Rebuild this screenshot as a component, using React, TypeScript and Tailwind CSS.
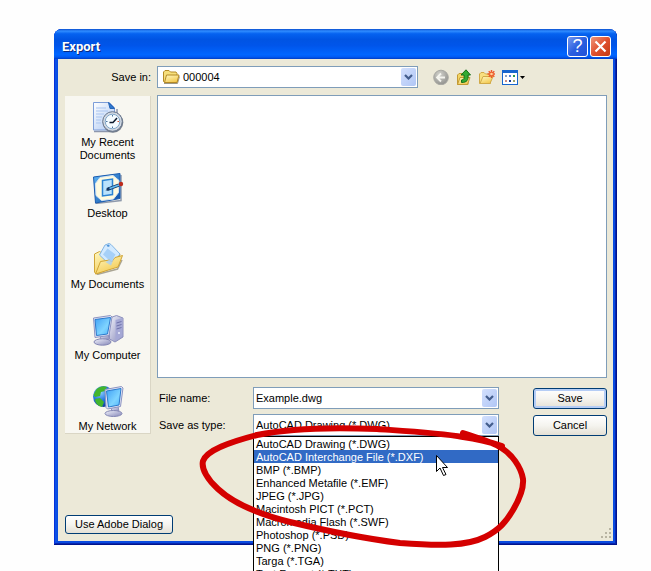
import { useState, type ReactNode } from 'react'

const FILE_TYPES = [
  'AutoCAD Drawing (*.DWG)',
  'AutoCAD Interchange File (*.DXF)',
  'BMP (*.BMP)',
  'Enhanced Metafile (*.EMF)',
  'JPEG (*.JPG)',
  'Macintosh PICT (*.PCT)',
  'Macromedia Flash (*.SWF)',
  'Photoshop (*.PSD)',
  'PNG (*.PNG)',
  'Targa (*.TGA)',
  'Text Format (*.TXT)',
]

const PLACES = [
  { label: 'My Recent Documents', icon: <RecentIcon /> },
  { label: 'Desktop', icon: <DesktopIcon /> },
  { label: 'My Documents', icon: <DocumentsIcon /> },
  { label: 'My Computer', icon: <ComputerIcon /> },
  { label: 'My Network', icon: <NetworkIcon /> },
]

function Gradients() {
  return (
    <svg className="absolute size-0" aria-hidden="true">
      <defs>
        <linearGradient id="paper" x1="0" y1="0" x2="1" y2="1">
          <stop offset="0" stopColor="#ffffff" />
          <stop offset="1" stopColor="#a9c6f3" />
        </linearGradient>
        <linearGradient id="folder" x1="0" y1="0" x2="0.6" y2="1">
          <stop offset="0" stopColor="#fff9c4" />
          <stop offset="1" stopColor="#f3c94f" />
        </linearGradient>
        <linearGradient id="screen" x1="0" y1="0" x2="1" y2="1">
          <stop offset="0" stopColor="#3fa0f5" />
          <stop offset="0.6" stopColor="#7fd4ff" />
          <stop offset="1" stopColor="#4db4fa" />
        </linearGradient>
        <linearGradient id="metal" x1="0" y1="0" x2="1" y2="1">
          <stop offset="0" stopColor="#f1f2fb" />
          <stop offset="1" stopColor="#8587b8" />
        </linearGradient>
        <linearGradient id="desk" x1="0" y1="0" x2="1" y2="1">
          <stop offset="0" stopColor="#5fb4f3" />
          <stop offset="1" stopColor="#0c4fa8" />
        </linearGradient>
        <radialGradient id="globe" cx="0.35" cy="0.3" r="0.75">
          <stop offset="0" stopColor="#8fd0ff" />
          <stop offset="0.5" stopColor="#2a7be0" />
          <stop offset="1" stopColor="#0b3693" />
        </radialGradient>
        <radialGradient id="back" cx="0.4" cy="0.3" r="0.75">
          <stop offset="0" stopColor="#d2d2cc" />
          <stop offset="1" stopColor="#8f8f8b" />
        </radialGradient>
      </defs>
    </svg>
  )
}

function RecentIcon() {
  return (
    <svg className="size-8" viewBox="0 0 32 32" aria-hidden="true">
      <path d="M2 30.5h19l4-3V8" fill="none" stroke="#8d97ad" strokeWidth="1.5" />
      <path d="M1.500 1.500h16l5 5v22.500h-21z" fill="url(#paper)" stroke="#7c9dd8" />
      <path d="M16.500 1.500 18 7.500h4.500z" fill="#2e78cf" stroke="#2766b8" />
      <path d="M4 7h10M4 10h12M4 13h8M4 16h6M4 19h5M4 22h5" stroke="#a9c5f0" />
      <circle cx="21" cy="21.500" r="10.300" fill="#767e8c" />
      <circle cx="20.500" cy="20.500" r="9.800" fill="#d3d9e2" stroke="#65758c" />
      <circle cx="20.500" cy="20.500" r="7.300" fill="#f4fbff" stroke="#7fa6c9" />
      <path d="M20.500 14v1.500M20.500 25.500V27M14 20.500h1.500" stroke="#4d759e" />
      <path d="M25.500 20.500H27" stroke="#d9512c" />
      <path d="M17.500 21.500h3.500l4-4.500" fill="none" stroke="#0d1a2d" strokeWidth="1.500" />
    </svg>
  )
}

function DesktopIcon() {
  return (
    <svg className="size-8" viewBox="0 0 32 32" aria-hidden="true">
      <path d="M3.500 31.500 29 28.500V3" fill="none" stroke="#8f9aac" strokeWidth="1.500" />
      <path d="M1.500 5 28 1.500v25L3.500 31z" fill="url(#desk)" stroke="#1b5cb0" />
      <path d="m8 5.500 13-2 6 5-.5 12-5 6.500-12 1.500-5.500-5-.5-12z" fill="#fffbe0" stroke="#d9e6f2" />
      <path d="M10.500 8.500 20.500 7v15.500l-10 1.500z" fill="#b9e2fc" stroke="#2b83d3" strokeWidth="1.500" />
      <path d="m13.500 18.500 3.500-3.500 1.500 3z" fill="#10294e" />
      <path d="m15 17.500 12-4.500" stroke="#143763" strokeWidth="3.200" />
      <path d="m17.500 16.500 9.500-3.500" stroke="#62bdf4" strokeWidth="1.800" />
      <circle cx="29" cy="12" r="2.200" fill="#bc2b1d" />
    </svg>
  )
}

function DocumentsIcon() {
  return (
    <svg className="size-8" viewBox="0 0 32 32" aria-hidden="true">
      <path d="M5 31.500 25.500 26 30 17" fill="none" stroke="#aaa593" strokeWidth="1.500" />
      <path d="m2.500 11 5-2.500 2.500 1.500 10-2 8 3-5 13-19 7-1.500-2z" fill="url(#folder)" stroke="#d0a536" />
      <path d="m13 2 4-1.500 2 1 9 9.500-9 12L7.500 12z" fill="#d3eaff" stroke="#82b5e4" />
      <path d="m14.500 2.500 2-1 1.500 1.500-2 1z" fill="#4d92d8" />
      <path d="m15.500 5.500 8 6-4.500 7.500-8-7.500z" fill="#a6d0f8" />
      <path d="m3.500 31 5-12.500 9-1.500 2 2 3.500-4.500 7.500-2L26 24z" fill="url(#folder)" stroke="#d0a536" />
      <path d="m13.500 19 9-5-3.500 8.500z" fill="#a6d0f8" opacity="0.8" />
    </svg>
  )
}

function ComputerIcon() {
  return (
    <svg className="size-8" viewBox="0 0 32 32" aria-hidden="true">
      <path d="m17.500 4 7-2.500 6.500 2.500v19l-8 5-5.500-3z" fill="url(#metal)" stroke="#8d90bd" />
      <path d="m23.500 6 7-2v18.500l-7 4.500z" fill="#a5a8d5" />
      <path d="m24.500 9 5-1.500m-5 4.500 5-1.500m-5 4.500 5-1.500" stroke="#6d70a9" />
      <circle cx="27" cy="19" r="1" fill="#eef0ff" />
      <path d="m9 20-1 6h9l-1-7z" fill="url(#metal)" stroke="#9093be" />
      <ellipse cx="10.500" cy="28" rx="8.500" ry="3.200" fill="url(#metal)" stroke="#8487b4" />
      <path d="m1.500 4 17-2.500L20 3l-3 18.500L3 23.500z" fill="#e3e5f5" stroke="#8d94c2" />
      <path d="m3 5.500 15.500-2L15.500 20 4.500 21.500z" fill="url(#screen)" stroke="#2b79cc" />
    </svg>
  )
}

function NetworkIcon() {
  return (
    <svg className="size-8" viewBox="0 0 32 32" aria-hidden="true">
      <circle cx="11.500" cy="11.500" r="10.500" fill="url(#globe)" />
      <path d="M4 5c3-4 8-4.500 11-3l-2 4-4 1-1 4-5 1-1.500-2zM3 14l5-1 4 4-2 5c-4-1-7-4-7-8zM15 5l5-1 2 6-6 2-3-3z" fill="#43b52d" />
      <path d="m20 22-1 5h8l-1-6z" fill="url(#metal)" stroke="#9093be" />
      <ellipse cx="21.500" cy="28.500" rx="8.500" ry="3" fill="url(#metal)" stroke="#8487b4" />
      <path d="m13 4.500 16.500-3L31 3l-2.500 18.500-13 2.500-1.500-1.500z" fill="#e3e5f5" stroke="#8d94c2" />
      <path d="m14.500 6 14.500-2.500-2 16.500-10.500 2z" fill="url(#screen)" stroke="#2b79cc" />
    </svg>
  )
}

function FolderIcon() {
  return (
    <svg className="h-4 w-[18px] shrink-0" viewBox="0 0 18 16" aria-hidden="true">
      <path d="M2 14.500h13.500l2-7" fill="none" stroke="#9d9784" />
      <path d="M1.500 3 3 1.500h4L8.500 3H14l1 1.500v9H2.500l-1-1z" fill="#f6df7c" stroke="#b48a27" />
      <path d="m2.500 13.500 2-7.500H17l-2 7.500z" fill="url(#folder)" stroke="#b48a27" />
    </svg>
  )
}

function ToolIcon({ label, children }: { label: string; children: ReactNode }) {
  return (
    <button type="button" aria-label={label} className="size-4 shrink-0">
      <svg className="size-4" viewBox="0 0 16 16" aria-hidden="true">
        {children}
      </svg>
    </button>
  )
}

function Chevron() {
  return (
    <span className="pointer-events-none flex h-[18px] w-[15px] items-center justify-center rounded-xs bg-gradient-to-br from-[#d3e0fd] to-[#b0c6f5]">
      <svg className="h-[6px] w-[9px]" viewBox="0 0 9 6" aria-hidden="true">
        <path d="m1 1 3.500 3.500L8 1" fill="none" stroke="#435d8c" strokeWidth="2.200" />
      </svg>
    </span>
  )
}

function PushButton({ className, children }: { className: string; children: ReactNode }) {
  return (
    <button
      type="button"
      className={`rounded-[3px] border border-[#003c74] bg-gradient-to-b from-white via-[#f5f4ef] to-[#e4e0d5] text-center ${className}`}
    >
      {children}
    </button>
  )
}

export default function App() {
  const [fileName, setFileName] = useState('Example.dwg')
  const [fileType, setFileType] = useState(FILE_TYPES[0])
  const [highlighted, setHighlighted] = useState(1)

  return (
    <div className="h-screen overflow-hidden bg-[#fefefe] pt-[29px] pr-[34px] pl-[54px] font-['Liberation_Sans',sans-serif] text-[11px] leading-[13px] text-black">
      <Gradients />
      <main className="relative rounded-t-lg bg-[#0a4be0] px-1 pb-1 shadow-[inset_-1px_-1px_#00138c,inset_1px_0_#0831d9,inset_-2px_-2px_#0726ae,inset_3px_0_#0b50e6]">
        <header className="-mx-1 flex h-[30px] items-center gap-[2px] rounded-t-lg bg-[linear-gradient(180deg,#0a4fd0_0%,#2f8cff_7%,#0562f0_16%,#0054e3_35%,#0055ea_55%,#0066ff_85%,#005bf5_93%,#003dc4_100%)] pt-1 pr-[6px] pl-2">
          <h1 className="flex-1 font-[Roboto,sans-serif] text-[13px] font-bold text-white [text-shadow:1px_1px_#0a2a80]">
            Export
          </h1>
          <button
            type="button"
            aria-label="Help"
            className="flex size-[21px] items-center justify-center rounded-[3px] border border-white bg-gradient-to-br from-[#7597ee] via-[#2a5fe0] to-[#1f50d8] text-[18px] leading-[18px] text-white"
          >
            ?
          </button>
          <button
            type="button"
            aria-label="Close"
            className="flex size-[21px] items-center justify-center rounded-[3px] border border-white bg-gradient-to-br from-[#ee9478] via-[#e0502e] to-[#c33a12]"
          >
            <svg className="size-[13px]" viewBox="0 0 13 13" aria-hidden="true">
              <path d="m1.500 1.500 10 10m0-10-10 10" stroke="#fff" strokeWidth="2.200" />
            </svg>
          </button>
        </header>

        <div className="bg-[#ece9d8] pt-[7px] pr-[6px] pb-[7px] pl-[7px]">
          <div className="mb-[7px] flex h-[22px] items-center">
            <label htmlFor="save-in" className="mr-[6px] w-[86px] text-right">
              Save in:
            </label>
            <div className="flex h-[22px] flex-1 items-center border border-[#7f9db9] bg-white pr-px pl-1">
              <FolderIcon />
              <select id="save-in" className="h-5 min-w-0 flex-1 appearance-none pl-[3px] outline-none">
                <option>000004</option>
              </select>
              <Chevron />
            </div>
            <div className="flex w-[189px] items-center gap-[7px] pl-[15px]">
              <ToolIcon label="Back">
                <circle cx="8" cy="8.500" r="7.300" fill="url(#back)" stroke="#a9a9a3" />
                <path d="M12 8.500H4.500M8 4.500l-4 4 4 4" fill="none" stroke="#f4f4ee" strokeWidth="1.800" />
              </ToolIcon>
              <ToolIcon label="Up one level">
                <path d="M1.500 6 3 4.500h3l2 1.500h4v9.500H1.500z" fill="#f3d563" stroke="#c39a34" />
                <path d="m1.500 15.500 2.500-7h10l-2.500 7z" fill="url(#folder)" stroke="#c39a34" />
                <path d="M5.500 13.500c5.500 0 7-2.500 6.500-7.500h2.500L10 .8 5 6h3c.5 3.500 0 5-2.500 5z" fill="#34aa32" stroke="#157018" />
              </ToolIcon>
              <ToolIcon label="Create new folder">
                <path d="M.5 5 2 3.500h3L6.500 5h5v9.500H.5z" fill="#f8df80" stroke="#d1aa48" />
                <path d="m1 14.500 3-7h10l-3 7z" fill="url(#folder)" stroke="#d1aa48" />
                <path d="M12.500 1v8M8.500 5h7.500M9.700 2.200l5.600 5.600m0-5.600L9.700 7.800" stroke="#ee5a2b" strokeWidth="1.500" />
                <circle cx="12.500" cy="5" r="1.300" fill="#ffd49a" />
              </ToolIcon>
              <button type="button" aria-label="Views" className="flex items-center gap-[2px]">
                <svg className="size-4" viewBox="0 0 16 16" aria-hidden="true">
                  <rect x="0.500" y="1.500" width="15" height="14" fill="#fff" stroke="#1766ce" />
                  <path d="M0 2.500h16" stroke="#1766ce" strokeWidth="3" />
                  <path d="M3 6h2v2H3z" fill="#8ca2bd" />
                  <path d="M7 6h2v2H7z" fill="#4c7fda" />
                  <path d="M3 11h2v2H3z" fill="#c98e86" />
                  <path d="M11 6h2v2h-2z" fill="#2b9a4b" />
                  <path d="M7 11h2v2H7z" fill="#163d9c" />
                  <path d="M11 11h2v2h-2z" fill="#9ba36e" />
                </svg>
                <svg className="h-[3px] w-[5px]" viewBox="0 0 5 3" aria-hidden="true">
                  <path d="M0 0h5L2.500 3z" />
                </svg>
              </button>
            </div>
          </div>

          <div className="flex items-start gap-[6px]">
            <nav className="mt-px h-[338px] w-[86px] overflow-hidden border-r border-b border-[#dad6c5] bg-[#f8f7f1] pt-[5px]">
              {PLACES.map(({ label, icon }) => (
                <button
                  key={label}
                  type="button"
                  className="flex h-[71px] w-full flex-col items-center gap-[3px] px-[2px]"
                >
                  {icon}
                  <span className="px-px">{label}</span>
                </button>
              ))}
            </nav>

            <div className="min-w-0 flex-1">
              <div className="h-[283px] border border-[#7f9db9] bg-white" />

              <div className="mt-[9px] flex h-[22px] items-center">
                <label htmlFor="file-name" className="w-24 pl-[2px]">
                  File name:
                </label>
                <div className="flex h-[22px] min-w-0 flex-1 items-center border border-[#7f9db9] bg-white pr-px">
                  <input
                    id="file-name"
                    className="h-5 min-w-0 flex-1 pl-[2px] outline-none"
                    value={fileName}
                    onChange={(e) => setFileName(e.target.value)}
                  />
                  <Chevron />
                </div>
                <PushButton className="ml-[34px] h-[21px] w-[74px] shadow-[inset_0_0_0_2px_#b5cdf5]">
                  Save
                </PushButton>
              </div>

              <div className="mt-[5px] flex h-[22px] items-center">
                <label htmlFor="file-type" className="w-24 pl-[2px]">
                  Save as type:
                </label>
                <div className="relative flex h-[22px] min-w-0 flex-1 items-center border border-[#7f9db9] bg-white pr-px">
                  <select
                    id="file-type"
                    className="h-5 min-w-0 flex-1 appearance-none pl-[2px] outline-none"
                    value={fileType}
                    onChange={(e) => setFileType(e.target.value)}
                  >
                    {FILE_TYPES.map((type) => (
                      <option key={type}>{type}</option>
                    ))}
                  </select>
                  <Chevron />
                  <ul
                    role="listbox"
                    aria-label="Save as type"
                    className="absolute top-[21px] -right-px -left-px border border-black bg-white"
                  >
                    {FILE_TYPES.map((type, index) => (
                      <li
                        key={type}
                        role="option"
                        aria-selected={index === highlighted}
                        className={`h-[13px] pl-[2px] leading-[15px] ${index === highlighted ? 'bg-[#316ac5] text-white' : ''}`}
                        onMouseEnter={() => setHighlighted(index)}
                        onClick={() => setFileType(type)}
                      >
                        {type}
                      </li>
                    ))}
                  </ul>
                </div>
                <PushButton className="ml-[34px] h-[21px] w-[74px]">Cancel</PushButton>
              </div>
            </div>
          </div>

          <div className="mt-[79px] flex items-end justify-between">
            <PushButton className="h-[19px] w-[108px]">Use Adobe Dialog</PushButton>
            <svg className="-mr-[5px] -mb-[5px] size-3" viewBox="0 0 12 12" aria-hidden="true">
              <path d="M9 1h2v2H9zM5 5h2v2H5zM9 5h2v2H9zM1 9h2v2H1zM5 9h2v2H5zM9 9h2v2H9z" fill="#b8b4a2" />
            </svg>
          </div>
        </div>

        {/* marker loop and pointer, drawn over the open list */}
        <svg
          className="pointer-events-none absolute top-[391px] left-[141px] h-[135px] w-[335px]"
          viewBox="195 420 335 135"
          aria-hidden="true"
        >
          <path
            d="M436.500 455.500v16l3.500-3.500 3.500 7.500 2.500-1-3.500-7h5z"
            fill="#fff"
            stroke="#000"
          />
          <path
            d="M463 433C476 437 489 441 500 447C512 454 521 467 523 479C524 490 519 500 513 510C506 522 499 530 485 537C467 546 440 546 400 543C360 538 323 530 290 522C258 514 232 502 218 489C208 480 201 469 203 461C207 450 230 442 257 435C290 428 330 427 377 429C405 431 440 433 463 437C479 439 490 442 502 446"
            fill="none"
            stroke="#d40000"
            strokeWidth="6"
            strokeLinecap="round"
            strokeLinejoin="round"
          />
        </svg>
      </main>
    </div>
  )
}
